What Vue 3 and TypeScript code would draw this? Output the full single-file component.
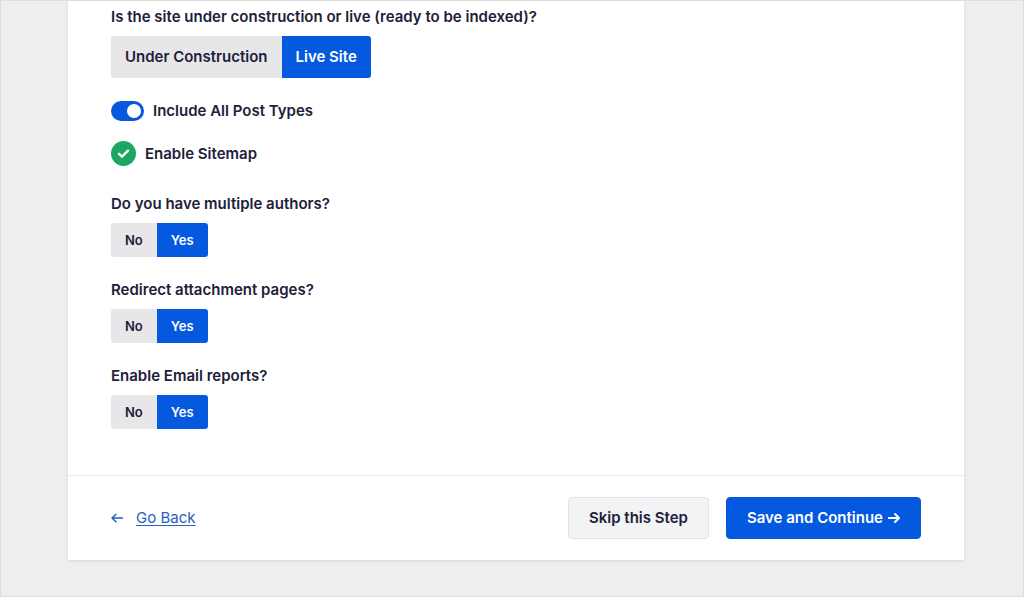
<script setup lang="ts">
import { reactive, ref } from 'vue'

interface Question {
  id: string
  label: string
  options: string[]
}

const siteStatus: Question = {
  id: 'site-status',
  label: 'Is the site under construction or live (ready to be indexed)?',
  options: ['Under Construction', 'Live Site'],
}

const questions: Question[] = [
  { id: 'authors', label: 'Do you have multiple authors?', options: ['No', 'Yes'] },
  { id: 'attachments', label: 'Redirect attachment pages?', options: ['No', 'Yes'] },
  { id: 'reports', label: 'Enable Email reports?', options: ['No', 'Yes'] },
]

const answers = reactive<Record<string, string>>({
  'site-status': 'Live Site',
  authors: 'Yes',
  attachments: 'Yes',
  reports: 'Yes',
})

const allPostTypes = ref(true)
const sitemap = ref(true)
</script>

<template>
  <div class="page">
    <main class="card">
      <form id="setup" class="fields" @submit.prevent>
        <fieldset class="question">
          <legend>{{ siteStatus.label }}</legend>
          <div class="segments large">
            <label v-for="option in siteStatus.options" :key="option" class="segment">
              <input v-model="answers[siteStatus.id]" type="radio" :name="siteStatus.id" :value="option" />
              <span>{{ option }}</span>
            </label>
          </div>
        </fieldset>

        <label class="option">
          <input v-model="allPostTypes" class="switch" type="checkbox" role="switch" />
          <span>Include All Post Types</span>
        </label>

        <label class="option">
          <span class="check">
            <input v-model="sitemap" type="checkbox" />
            <svg viewBox="0 0 25 25" aria-hidden="true">
              <circle cx="12.5" cy="12.5" r="12.5" />
              <path d="M8 12.8l3 2.9 6-6" />
            </svg>
          </span>
          <span>Enable Sitemap</span>
        </label>

        <fieldset v-for="q in questions" :key="q.id" class="question">
          <legend>{{ q.label }}</legend>
          <div class="segments">
            <label v-for="option in q.options" :key="option" class="segment">
              <input v-model="answers[q.id]" type="radio" :name="q.id" :value="option" />
              <span>{{ option }}</span>
            </label>
          </div>
        </fieldset>
      </form>

      <footer class="actions">
        <a class="back" href="#back">
          <svg class="arrow" viewBox="0 0 12 12" aria-hidden="true"><path d="M11.5 6H1M5 2.2L1 6l4 3.8" /></svg>
          <span>Go Back</span>
        </a>
        <button class="button" type="button">Skip this Step</button>
        <button class="button primary" type="submit" form="setup">
          Save and Continue
          <svg class="arrow" viewBox="0 0 12 12" aria-hidden="true"><path d="M.8 6H11M7 2l4 4-4 4" /></svg>
        </button>
      </footer>
    </main>
  </div>
</template>

<style>
body {
  margin: 0;
  background: #eee;
}
</style>

<style scoped>
.page {
  box-sizing: border-box;
  min-height: 100vh;
  padding: 0 59px 35px 67px;
  border: 1px solid #dedede;
  background: #eee;
  color: #1d2039;
  font: 600 15px/20px Inter, "Liberation Sans", sans-serif;
}

.card {
  background: #fff;
  box-shadow: 0 1px 3px rgba(0, 0, 0, 0.1);
}

.fields {
  display: flex;
  flex-direction: column;
  align-items: flex-start;
  padding: 6px 43px 46px;
}

.question {
  min-width: 0;
  margin: 0 0 23px;
  padding: 0;
  border: 0;
}

.question:last-child {
  margin-bottom: 0;
}

legend {
  padding: 0;
  margin-bottom: 9px;
}

.segments {
  display: flex;
  width: fit-content;
  overflow: hidden;
  border-radius: 3px;
  font-size: 13px;
}

.segments.large {
  font-size: 15px;
}

.segment {
  position: relative;
  cursor: pointer;
}

.segment span {
  display: block;
  padding: 7px 14px;
  background: #e7e7e9;
}

.large .segment span {
  padding: 11px 14px;
}

.segment input,
.check input {
  position: absolute;
  margin: 0;
  opacity: 0;
}

.segment input:checked + span {
  background: #0559df;
  color: #fff;
}

.option {
  display: flex;
  align-items: center;
  gap: 9px;
  margin-bottom: 20px;
  cursor: pointer;
}

.option + .question {
  margin-top: 8px;
}

.switch {
  appearance: none;
  box-sizing: border-box;
  display: flex;
  width: 33px;
  height: 20px;
  margin: 0;
  padding: 3px;
  border-radius: 10px;
  background: #aaa;
}

.switch::before {
  content: "";
  width: 14px;
  height: 14px;
  border-radius: 50%;
  background: #fff;
}

.switch:checked {
  justify-content: flex-end;
  background: #0559df;
}

.check {
  position: relative;
  display: flex;
}

.check svg {
  width: 25px;
  height: 25px;
}

.check circle {
  fill: #bbb;
}

.check input:checked + svg circle {
  fill: #1aa760;
}

.check path {
  fill: none;
  stroke: #fff;
  stroke-width: 2.4;
  stroke-linecap: round;
  stroke-linejoin: round;
}

.actions {
  display: flex;
  align-items: center;
  gap: 17px;
  padding: 21px 43px;
  border-top: 1px solid #ebebed;
}

.back {
  display: flex;
  align-items: center;
  gap: 13px;
  margin-right: auto;
  color: #2860bd;
  font-weight: 400;
  text-decoration: none;
}

.back span {
  text-decoration: underline;
  text-underline-offset: 2px;
}

.arrow {
  width: 12px;
  height: 12px;
  fill: none;
  stroke: currentColor;
  stroke-width: 1.5;
  stroke-linecap: round;
  stroke-linejoin: round;
}

.button {
  display: flex;
  align-items: center;
  gap: 5px;
  padding: 10px 20px;
  border: 1px solid #e2e3e6;
  border-radius: 4px;
  background: #f2f3f5;
  color: inherit;
  font: inherit;
  cursor: pointer;
}

.primary {
  border-color: #0559df;
  background: #0559df;
  color: #fff;
}

.primary .arrow {
  stroke-width: 2;
}
</style>
